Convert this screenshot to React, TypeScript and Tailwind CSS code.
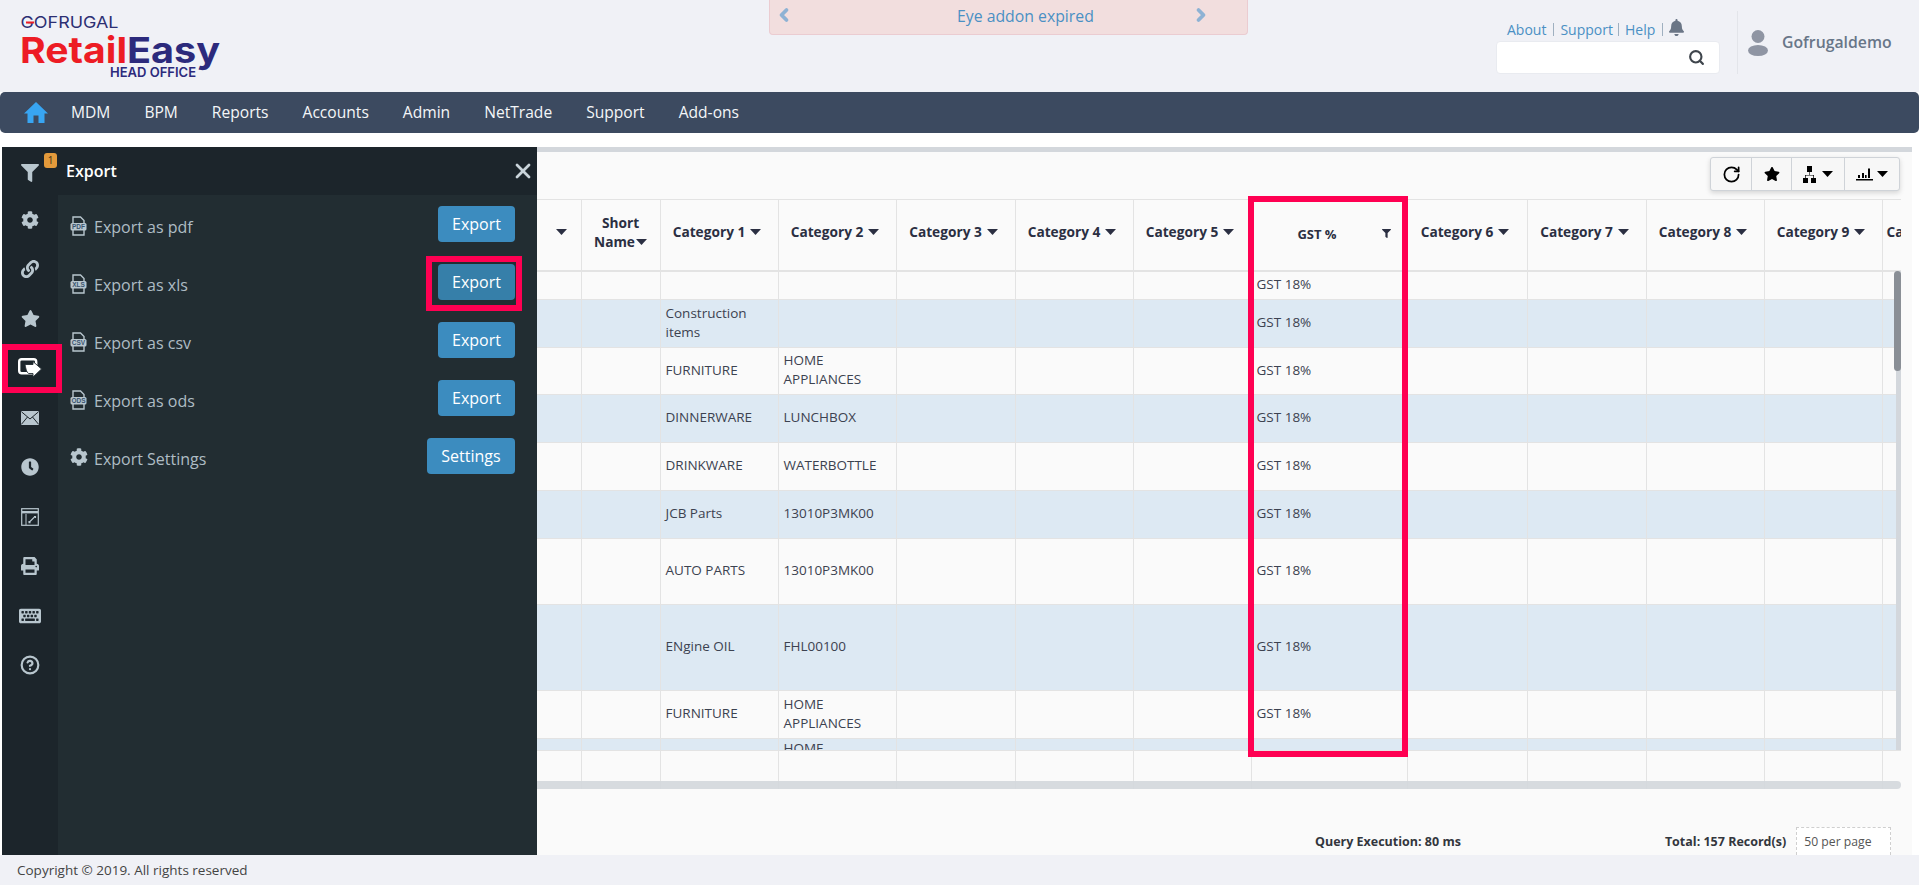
import React from 'react';
import { ChevronLeft, ChevronRight, HelpCircle, Search, RotateCw, X } from 'lucide-react';
import { FaBell, FaClock, FaCog, FaFilter, FaKeyboard, FaLink, FaPrint, FaStar } from 'react-icons/fa';

const font = 'font-["Open_Sans","Noto_Sans",sans-serif]';

const navItems = ['MDM', 'BPM', 'Reports', 'Accounts', 'Admin', 'NetTrade', 'Support', 'Add-ons'];

const exportRows = [
  { label: 'Export as pdf', tag: 'PDF', button: 'Export' },
  { label: 'Export as xls', tag: 'XLS', button: 'Export', active: true },
  { label: 'Export as csv', tag: 'CSV', button: 'Export' },
  { label: 'Export as ods', tag: 'ODS', button: 'Export' },
];

const rows = [
  { h: 'h-[29px]', c1: '', c2: '' },
  { h: 'h-[48px]', c1: 'Construction items', c2: '' },
  { h: 'h-[47px]', c1: 'FURNITURE', c2: 'HOME APPLIANCES' },
  { h: 'h-[48px]', c1: 'DINNERWARE', c2: 'LUNCHBOX' },
  { h: 'h-[48px]', c1: 'DRINKWARE', c2: 'WATERBOTTLE' },
  { h: 'h-[48px]', c1: 'JCB Parts', c2: '13010P3MK00' },
  { h: 'h-[66px]', c1: 'AUTO PARTS', c2: '13010P3MK00' },
  { h: 'h-[86px]', c1: 'ENgine OIL', c2: 'FHL00100' },
  { h: 'h-[48px]', c1: 'FURNITURE', c2: 'HOME APPLIANCES' },
];

const Caret = ({ className = 'ml-[5px]' }: { className?: string }) => (
  <svg width="11" height="6" viewBox="0 0 11 6" fill="currentColor" className={`inline-block align-[2px] ${className}`}>
    <path d="M0 0h11L5.5 6z" />
  </svg>
);

const FileTag = ({ tag }: { tag: string }) => (
  <svg width="17" height="20" viewBox="0 0 17 20" className="text-[#b8c6ce] shrink-0 mt-[4px]">
    <path d="M3 7V1h7.5L14 4.5V7M3 14v5h11v-5" fill="none" stroke="currentColor" strokeWidth="1.4" />
    <rect x="0.5" y="7" width="16" height="7.5" rx="1.5" fill="currentColor" />
    <text x="8.5" y="13.2" textAnchor="middle" fontSize="6.5" fontWeight="700" fill="#3a5570" fontFamily="Liberation Sans">{tag}</text>
  </svg>
);

const HomeIcon = () => (
  <svg width="24" height="21" viewBox="0 0 24 21" fill="#38a5f2" className="mr-[6px]">
    <path d="M12 0L24 11.5H20.5V21H14.5V13.5H9.5V21H3.5V11.5H0z" />
  </svg>
);

const UserIcon = () => (
  <svg width="20" height="26" viewBox="0 0 20 26" fill="#8f95a3">
    <circle cx="10" cy="6.5" r="6.5" />
    <ellipse cx="10" cy="20.5" rx="10" ry="5.5" />
  </svg>
);

const ExportIcon = () => (
  <svg width="24" height="20" viewBox="0 0 24 20" fill="none">
    <rect x="1.2" y="1.2" width="17" height="14" rx="2.5" stroke="#fff" strokeWidth="2.4" />
    <path d="M7 6.5h8V3.5l8.5 7.5-8.5 8v-3.5H11C9 15.5 7.8 11 7 6.5z" fill="#fff" stroke="#222d32" strokeWidth="0.9" />
  </svg>
);

const MailIcon = () => (
  <svg width="18" height="14" viewBox="0 0 18 14">
    <rect width="18" height="14" rx="1" fill="#b8c6ce" />
    <path d="M0.5 0.8L9 8l8.5-7.2M0.5 13.2L6.5 6M17.5 13.2L11.5 6" fill="none" stroke="#1c252b" strokeWidth="1" />
  </svg>
);

const WindowIcon = () => (
  <svg width="18" height="18" viewBox="0 0 18 18" fill="none" stroke="#b8c6ce">
    <rect x="0.7" y="0.7" width="16.6" height="16.6" strokeWidth="1.2" />
    <path d="M1 4.2h16" strokeWidth="2.4" />
    <path d="M5 6v11" strokeWidth="1" />
    <path d="M8 14.5l6-6M13 8.5h1.5V10M8 13v1.8h1.6" strokeWidth="1.1" />
  </svg>
);

const BarsIcon = () => (
  <svg width="17" height="14" viewBox="0 0 17 14" fill="#000">
    <rect x="0" y="12" width="17" height="1.5" />
    <rect x="2" y="8" width="2" height="3" />
    <rect x="6" y="6" width="2" height="5" />
    <rect x="9" y="8" width="1.6" height="3" />
    <rect x="12" y="1.5" width="2" height="9.5" />
  </svg>
);

const TreeIcon = () => (
  <svg width="13" height="17" viewBox="0 0 13 17" fill="#000">
    <rect x="4" y="0" width="5" height="6" />
    <rect x="0" y="12" width="5" height="5" />
    <rect x="8" y="12" width="5" height="5" />
    <path d="M6.2 6h0.6v3H11v3h-0.7V9.6H2.7V12H2V9h4.2z" />
  </svg>
);

const Logo = () => (
  <svg width="210" height="70" viewBox="0 0 210 70" className="block">
    <text x="0.5" y="17" fontFamily="Inter" fontSize="16.5" fill="#2c2f73" textLength="98" lengthAdjust="spacingAndGlyphs">GOFRUGAL</text>
    <rect x="6" y="10.5" width="8" height="2" fill="#ed1c24" />
    <text x="0" y="52" fontFamily="Inter" fontWeight="700" fontSize="36" fill="#ed1c24" textLength="107" lengthAdjust="spacingAndGlyphs">Retail</text>
    <text x="107" y="52" fontFamily="Inter" fontWeight="700" fontSize="36" fill="#2c2a7c" textLength="93" lengthAdjust="spacingAndGlyphs">Easy</text>
    <text x="90" y="66" fontFamily="Inter" fontWeight="600" fontSize="13" fill="#2c2a7c" textLength="86" lengthAdjust="spacingAndGlyphs">HEAD OFFICE</text>
  </svg>
);

function Header() {
  return (
    <header className="h-[92px] bg-[#f0f1f6] flex shrink-0">
      <div className="w-[769px] pl-[20px] pt-[11px] shrink-0"><Logo /></div>
      <div className="w-[479px] h-[35px] shrink-0 bg-[#f2dede] border border-t-0 border-[#ebccd1] rounded-b-[4px] flex items-center pl-[4px] pr-[36px] text-[#4a90c4]">
        <ChevronLeft size={20} strokeWidth={4.5} className="text-[#8eb2d4] -mt-[4px]" />
        <span className="text-[15.8px] ml-[163px]">Eye addon expired</span>
        <ChevronRight size={20} strokeWidth={4.5} className="text-[#8eb2d4] -mt-[4px] ml-auto" />
      </div>
      <div className="w-[248px] shrink-0" />
      <div className="w-[224px] pt-[18px] shrink-0">
        <div className="flex items-center h-[23px] pl-[11px] text-[14px] text-[#4a90c4]">
          <span>About</span>
          <span className="w-px h-[13px] bg-[#9fb0c0] mx-[6.5px]" />
          <span>Support</span>
          <span className="w-px h-[13px] bg-[#9fb0c0] mx-[5.5px]" />
          <span>Help</span>
          <span className="w-px h-[13px] bg-[#9fb0c0] ml-[7px] mr-[5px]" />
          <FaBell size={17} className="text-[#6b7686] -mt-[5px]" />
        </div>
        <div className="h-[33px] bg-white border border-[#e9ebf0] rounded-[4px] flex items-center justify-end pr-[14px]">
          <Search size={17} strokeWidth={3} className="text-[#3f454c]" />
        </div>
      </div>
      <div className="ml-[17px] mt-[11px] h-[63px] border-l border-[#e3e5ea] pl-[10px] flex items-center gap-[14px] text-[#687688]">
        <UserIcon />
        <span className="text-[15.8px] font-semibold">Gofrugaldemo</span>
      </div>
    </header>
  );
}

function Nav() {
  return (
    <nav className="h-[41px] shrink-0 bg-[#3c4a60] rounded-[5px] flex items-center pl-[24px] text-white">
      <HomeIcon />
      {navItems.map((n) => (
        <span key={n} className="px-[17px] text-[15.6px] text-[#f4f6f8]">{n}</span>
      ))}
    </nav>
  );
}

function Sidebar() {
  const c = 'text-[#b8c6ce]';
  const icons = [
    <FaCog key="gear" size={18} className={c} />,
    <FaLink key="link" size={18} className={c} />,
    <FaStar key="star" size={19} className={c} />,
    <ExportIcon key="exp" />,
    <MailIcon key="mail" />,
    <FaClock key="clock" size={18} className={c} />,
    <WindowIcon key="win" />,
    <FaPrint key="print" size={18} className={c} />,
    <FaKeyboard key="kb" size={22} className={c} />,
    <HelpCircle key="help" size={20} strokeWidth={2.6} className={c} />,
  ];
  return (
    <div className="w-[56px] shrink-0 bg-[#1c252b] flex flex-col items-center">
      {icons.map((ic, i) => (
        <div key={i} className="h-[49.5px] w-full flex items-center justify-center">{ic}</div>
      ))}
    </div>
  );
}

function ExportPanel() {
  return (
    <aside className="w-[535px] shrink-0 bg-[#222d32] flex flex-col relative">
      <div className="h-[48px] bg-[#1c252b] flex items-center shrink-0">
        <div className="w-[56px] relative flex justify-center">
          <FaFilter size={18} className="text-[#b8c6ce] mt-[3px]" />
          <span className="absolute left-[42px] -top-[8px] w-[13px] h-[15px] rounded-[3px] bg-[#e39a3b] text-[#3d2c12] text-[10px] leading-[15px] text-center">1</span>
        </div>
        <span className="text-white text-[16px] font-semibold ml-[8px]">Export</span>
        <X size={24} strokeWidth={2.8} className="ml-auto mr-[2px] text-[#c9d4da]" />
      </div>
      <div className="flex-1 flex min-h-0">
        <Sidebar />
        <div className="flex-1 pl-[12px] pr-[22px] text-[#aebcc4] text-[16px]">
          {exportRows.map((r) => (
            <div key={r.label} className="h-[58px] flex items-center">
              <FileTag tag={r.tag} />
              <span className="ml-[7px] mt-[6px]">{r.label}</span>
              <button className={`ml-auto w-[77px] h-[36px] rounded-[4px] text-white text-[16px] ${r.active ? 'bg-[#367fa9]' : 'bg-[#3c8cbf]'}`}>{r.button}</button>
            </div>
          ))}
          <div className="h-[58px] flex items-center">
            <FaCog size={18} className="text-[#b8c6ce] mt-[2px]" />
            <span className="ml-[6px] mt-[6px]">Export Settings</span>
            <button className="ml-auto w-[88px] h-[36px] rounded-[4px] bg-[#3c8cbf] text-white text-[16px]">Settings</button>
          </div>
        </div>
      </div>
      {/* highlight boxes drawn on the screenshot */}
      <div className="absolute left-0 top-[197px] w-[60px] h-[49px] border-[6px] border-[#ff0052]" />
      <div className="absolute left-[424px] top-[109px] w-[96px] h-[55px] border-[6px] border-[#ff0052]" />
    </aside>
  );
}

function Toolbar() {
  return (
    <div className="h-[47px] shrink-0 flex justify-end items-start pt-[5px] pr-[12px]">
      <div className="h-[34px] flex bg-[#f7f7f7] border border-[#cfd3d8] rounded-[3px] shadow-[0_2px_5px_rgba(0,0,0,0.15)] text-black">
        <div className="w-[41px] flex items-center justify-center border-r border-[#cfd3d8]"><RotateCw size={19} strokeWidth={2.2} /></div>
        <div className="w-[40px] flex items-center justify-center border-r border-[#cfd3d8]"><FaStar size={16} /></div>
        <div className="w-[53px] flex items-center justify-center gap-[6px] border-r border-[#cfd3d8]"><TreeIcon /><Caret className="ml-0" /></div>
        <div className="w-[54px] flex items-center justify-center gap-[4px]"><BarsIcon /><Caret className="ml-0" /></div>
      </div>
    </div>
  );
}

function DataTable() {
  const cell = 'border-r border-b border-[#e3e3e3] px-[5px] pb-[2px] align-middle leading-[19px]';
  const blank = Array.from({ length: 3 });
  const after = Array.from({ length: 5 });
  const th = 'border-r border-b-[2px] border-[#e3e3e3] font-bold text-[13.7px] text-[#2b2f42] align-middle';
  const catTh = `${th} pl-[4px] pr-[8px] pb-[5px]`;
  return (
    <table className="table-fixed border-collapse w-[1364px] text-[13.5px] text-[#3c4250] border-t border-[#e3e3e3]">
      <colgroup>
        <col className="w-[44px]" />
        <col className="w-[79px]" />
        <col className="w-[118px]" />
        <col className="w-[118px]" />
        <col className="w-[119px]" />
        <col className="w-[118px]" />
        <col className="w-[118px]" />
        <col className="w-[156px]" />
        <col className="w-[120px]" />
        <col className="w-[119px]" />
        <col className="w-[118px]" />
        <col className="w-[118px]" />
        <col className="w-[19px]" />
      </colgroup>
      <thead>
        <tr className="h-[71px]">
          <th className={`${th} text-right pb-[5px]`}><Caret className="mr-[14px]" /></th>
          <th className={`${th} leading-[19px] pb-[5px]`}>Short<br />Name<Caret className="ml-[1px]" /></th>
          {['Category 1', 'Category 2', 'Category 3', 'Category 4', 'Category 5'].map((h) => (
            <th key={h} className={catTh}>{h}<Caret /></th>
          ))}
          <th className={`${th} pb-[1px]`}>
            <div className="flex items-center justify-center relative pr-[24px] text-[13px]">
              GST %
              <FaFilter size={9} className="absolute right-[16px] top-[4px] text-[#2b2f42]" />
            </div>
          </th>
          {['Category 6', 'Category 7', 'Category 8', 'Category 9'].map((h) => (
            <th key={h} className={catTh}>{h}<Caret /></th>
          ))}
          <th className={`${th} pl-[4px] pb-[5px] text-left whitespace-nowrap overflow-hidden`}>Ca</th>
        </tr>
      </thead>
      <tbody>
        {rows.map((r, i) => (
          <tr key={i} className={`${r.h} ${i % 2 ? 'bg-[#dde9f3]' : ''}`}>
            <td className={cell} />
            <td className={cell} />
            <td className={cell}>{r.c1}</td>
            <td className={cell}>{r.c2}</td>
            {blank.map((_, j) => <td key={j} className={cell} />)}
            <td className={cell}>GST 18%</td>
            {after.map((_, j) => <td key={j} className={cell} />)}
          </tr>
        ))}
        <tr className="h-[11px] bg-[#dde9f3]">
          {Array.from({ length: 3 }).map((_, j) => <td key={j} className="border-r border-b border-[#e3e3e3]" />)}
          <td className="border-r border-b border-[#e3e3e3] px-[5px] align-top"><div className="h-[11px] overflow-hidden leading-[19px]">HOME</div></td>
          {Array.from({ length: 9 }).map((_, j) => <td key={j} className="border-r border-b border-[#e3e3e3]" />)}
        </tr>
        <tr className="h-[39px]">
          {Array.from({ length: 13 }).map((_, j) => <td key={j} className="border-r border-[#e3e3e3]" />)}
        </tr>
      </tbody>
    </table>
  );
}

function Content() {
  return (
    <section className="flex-1 bg-[#fafafa] border-t-[5px] border-[#d3d7dc] flex flex-col min-w-0 relative overflow-hidden">
      <Toolbar />
      <div className="w-[1364px] h-[590px] overflow-hidden relative shrink-0">
        <DataTable />
        <div className="absolute right-0 top-[72px] w-[5px] h-[479px] bg-[#d3d7dc]" />
        <div className="absolute right-0 top-[72px] w-[7px] h-[100px] bg-[#8a8f96] rounded-full" />
        <div className="absolute left-0 right-0 bottom-0 h-[8px] bg-[#d3d7dc]/90 rounded-r-full" />
      </div>
      <div className="flex-1 flex items-end text-[12.5px] font-bold text-[#33363d]">
        <span className="ml-[778px] mb-[3px]">Query Execution: 80 ms</span>
        <span className="ml-[204px] mb-[3px]">Total: 157 Record(s)</span>
        <div className="ml-[10px] w-[95px] h-[28px] bg-white border border-dashed border-[#cfcfcf] border-b-0 pl-[7px] pt-[5px] text-[12.2px] font-normal text-[#555] overflow-hidden whitespace-nowrap">50 per page</div>
      </div>
      {/* highlight box drawn on the screenshot */}
      <div className="absolute left-[711px] top-[44px] w-[160px] h-[561px] border-[6px] border-[#ff0052]" />
    </section>
  );
}

export default function App() {
  return (
    <div className={`${font} w-[1919px] h-[885px] overflow-hidden bg-white flex flex-col`}>
      <Header />
      <Nav />
      <main className="flex-1 min-h-0 pt-[14px] pl-[2px] pr-[7px] flex">
        <ExportPanel />
        <Content />
      </main>
      <footer className="h-[30px] shrink-0 bg-[#f0f1f6] pl-[17px] flex items-center text-[13.5px] text-[#444]">Copyright © 2019. All rights reserved</footer>
    </div>
  );
}
